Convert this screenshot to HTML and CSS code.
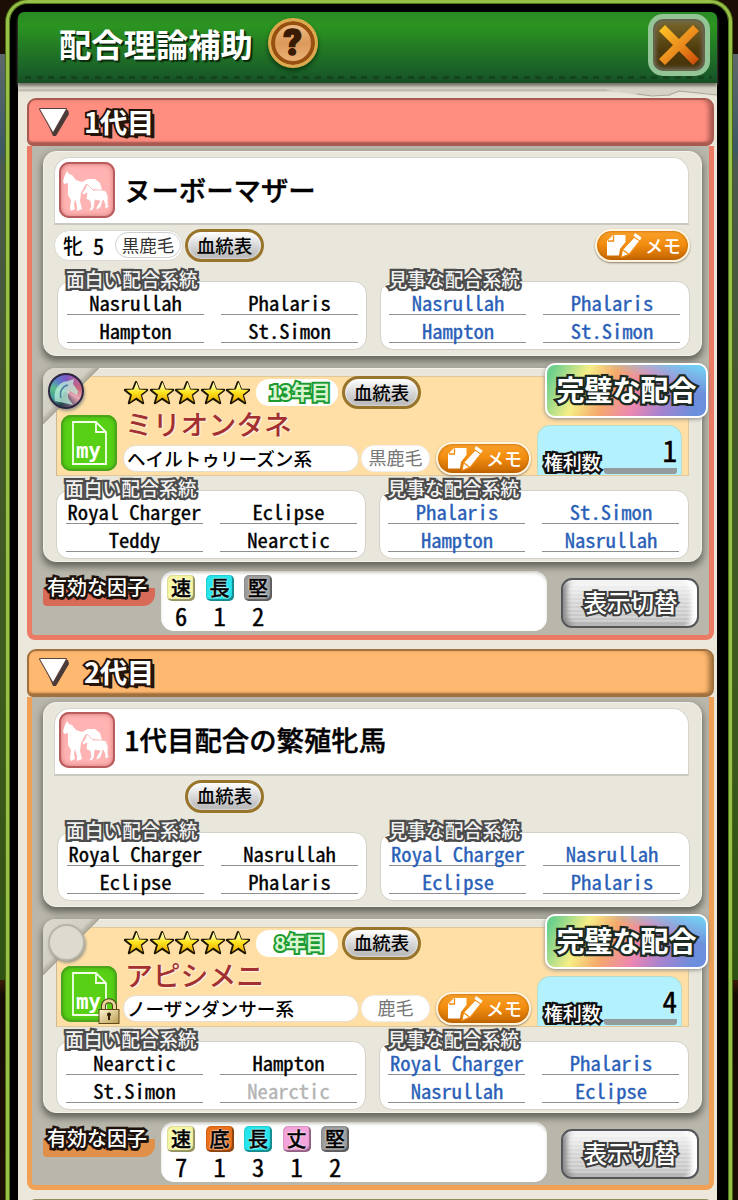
FILE: index.html
```
<!DOCTYPE html>
<html lang="ja">
<head>
    <meta charset="UTF-8">
    <meta name="viewport" content="width=device-width, initial-scale=1.0">
    <title>配合理論補助</title>
    <link rel="stylesheet" href="styles.css">
</head>
<body>
    <!-- shared icons -->
    <svg class="defs" width="0" height="0">
        <defs>
            <linearGradient id="gold" x1="0" y1="0" x2="0" y2="1">
                <stop offset="0.2" stop-color="#fffba0"/>
                <stop offset="0.5" stop-color="#ffe51e"/>
                <stop offset="1" stop-color="#e8a800"/>
            </linearGradient>
            <linearGradient id="cross" x1="0" y1="0" x2="1" y2="1">
                <stop offset="0" stop-color="#ffc928"/>
                <stop offset="0.55" stop-color="#ea8a1c"/>
                <stop offset="1" stop-color="#c94408"/>
            </linearGradient>
            <linearGradient id="brass" x1="0" y1="0" x2="1" y2="1">
                <stop offset="0" stop-color="#fff6cf"/>
                <stop offset="1" stop-color="#b99a52"/>
            </linearGradient>
        </defs>
        <symbol id="star" viewBox="0 0 26 26">
            <path d="M13 2.2 L15.9 9.6 L24 10 L17.7 15 L20 23 L13 18.4 L6 23 L8.3 15 L2 10 L10.1 9.6 Z" fill="#1b1500" stroke="#1b1500" stroke-width="2.4" stroke-linejoin="round"/>
            <path d="M13.6 2.2 L16.2 9.4 L23.6 10 L17.7 14.8 L19.7 22 L13.4 17.6 L7 22 L9 14.8 L3.3 10 L10.7 9.4 Z" fill="url(#gold)"/>
        </symbol>
        <symbol id="mare" viewBox="0 0 56 56">
            <path d="M8 9 L10 12 L13 13 L17 18 L23 20 L29 17 L36 17 L41 21 L43 28 L40 28 L33 27 L29 25 L27 22 L24 27 L22 31 L21 39 L23 47 L18 49 L18 44 L16 37 L15 42 L16 47 L12 49 L11 46 L12 38 L9 33 L9 26 L9 21 L5 22 L4 19 L6 13 Z" fill="#fff"/>
            <path d="M28 22 L31 25 L34 28 L43 28 L47 29 L49 34 L49 43 L50 45 L46 47 L46 42 L44 38 L42 45 L38 48 L37 46 L41 39 L36 38 L35 46 L32 49 L30 48 L32 45 L31 39 L27 37 L28 31 L24 33 L23 31 L26 27 Z" fill="#fff" stroke="#f5b4b4" stroke-width="0.8"/>
        </symbol>
        <symbol id="memo" viewBox="0 0 36 26">
            <path d="M7 3 H19.500 V10 L14 17 L13 23.500 H1 V9 Z" fill="#fff"/>
            <path d="M2 9 H7.500 V3.500" fill="none" stroke="#ef8a10" stroke-width="1.300"/>
            <path d="M28 5 L34 9 L23.500 22 L15 25.500 L16.500 17.500 Z" fill="#fff" stroke="#f08e12" stroke-width="1.200"/>
            <path d="M29 1 L35.500 5.500 L34 8.500 L27.500 4 Z" fill="#fff"/>
            <path d="M17 18 L22.500 22" stroke="#f08e12" stroke-width="1.200"/>
        </symbol>
        <symbol id="page" viewBox="0 0 56 56">
            <path d="M12 7 H35 L45 17 V49 H12 Z M35 7 V17 H45" fill="none" stroke="#f4ffe9" stroke-width="1.8"/>
        </symbol>
        <symbol id="arrow" viewBox="0 0 34 32">
            <path d="M5 4 H31 L32 8 L19 30 H16 Z" fill="#4a3a38"/>
            <path d="M3 3 H29 L16 26 Z" fill="#fff" stroke="#57413e" stroke-width="2" stroke-linejoin="round"/>
        </symbol>
        <symbol id="lock" viewBox="0 0 22 26">
            <path d="M5.5 13 V8 C5.5 1 16.500 1 16.500 8 V13" fill="none" stroke="#4d3c14" stroke-width="5"/>
            <path d="M5.500 13 V8 C5.500 1 16.500 1 16.500 8 V13" fill="none" stroke="#e6d59a" stroke-width="3"/>
            <rect x="1" y="11.500" width="20" height="14" fill="url(#brass)" stroke="#5d4817"/>
            <path d="M11 15 V22" stroke="#2e2105" stroke-width="2"/>
            <circle cx="11" cy="16.500" r="2" fill="#2e2105"/>
        </symbol>
    </svg>

    <div class="window">
        <header class="titlebar">
            <h1>配合理論補助</h1>
            <span class="help">?</span>
            <button class="close"><svg width="46" height="46" viewBox="0 0 46 46"><path d="M3 9 L9 3 L23 17 L37 3 L43 9 L29 23 L43 37 L37 43 L23 29 L9 43 L3 37 L17 23 Z" fill="url(#cross)"/></svg></button>
        </header>
        <main class="paper">
            <svg class="tear" width="110" height="14" viewBox="0 0 110 14"><path d="M0 3 L30 8 L62 9 L72 4 L110 8 V0 H0 Z" fill="#d6d3c5"/><path d="M30 7 L45 9 L62 8 L72 4 L110 8" fill="none" stroke="#aaa79a" stroke-width="1.200"/></svg>

            <section class="generation coral">
                <h2><svg width="34" height="32"><use href="#arrow"/></svg>1代目</h2>
                <div class="panel">
                    <article class="card mare">
                        <div class="name-box">
                            <span class="icon pink"><svg width="56" height="56"><use href="#mare"/></svg></span>
                            <span class="name">ヌーボーマザー</span>
                        </div>
                        <div class="info">
                            <div class="profile">牝<b>5</b><span class="coat">黒鹿毛</span></div>
                            <button class="pedigree">血統表</button>
                            <button class="memo"><svg width="36" height="26"><use href="#memo"/></svg>メモ</button>
                        </div>
                        <div class="groups">
                            <div class="group">
                                <h3>面白い配合系統</h3>
                                <div class="lines"><span>Nasrullah</span><span>Phalaris</span><span>Hampton</span><span>St.Simon</span></div>
                            </div>
                            <div class="group best">
                                <h3>見事な配合系統</h3>
                                <div class="lines"><span>Nasrullah</span><span>Phalaris</span><span>Hampton</span><span>St.Simon</span></div>
                            </div>
                        </div>
                    </article>

                    <article class="card stallion">
                        <span class="corner"></span>
                        <span class="orb rainbow"><svg width="36" height="36" viewBox="0 0 36 36"><path d="M7 28 C5 19 9 9 20 8 L26 6 L25 11 L30 18 L29 22 L22 18 L20 21 C19 26 24 29 25 32" fill="#bff1dc" opacity="0.75"/><path d="M13 25 C11 18 15 13 20 12" fill="none" stroke="#4b7d9c" stroke-width="1.500"/></svg></span>
                        <span class="badge">完璧な配合</span>
                        <div class="peach">
                            <span class="icon green"><svg width="56" height="56"><use href="#page"/></svg><b>my</b></span>
                            <div class="detail">
                                <div class="rank">
                                    <span class="stars"><svg><use href="#star"/></svg><svg><use href="#star"/></svg><svg><use href="#star"/></svg><svg><use href="#star"/></svg><svg><use href="#star"/></svg></span>
                                    <span class="year">13年目</span>
                                    <button class="pedigree">血統表</button>
                                </div>
                                <div class="sire">ミリオンタネ</div>
                                <div class="strain-row">
                                    <span class="strain">ヘイルトゥリーズン系</span>
                                    <span class="coat">黒鹿毛</span>
                                    <button class="memo"><svg width="36" height="26"><use href="#memo"/></svg>メモ</button>
                                </div>
                            </div>
                            <div class="rights"><span>権利数</span><b>1</b></div>
                        </div>
                        <div class="groups">
                            <div class="group">
                                <h3>面白い配合系統</h3>
                                <div class="lines"><span>Royal Charger</span><span>Eclipse</span><span>Teddy</span><span>Nearctic</span></div>
                            </div>
                            <div class="group best">
                                <h3>見事な配合系統</h3>
                                <div class="lines"><span>Phalaris</span><span>St.Simon</span><span>Hampton</span><span>Nasrullah</span></div>
                            </div>
                        </div>
                    </article>

                    <div class="factors">
                        <h4>有効な因子</h4>
                        <ul>
                            <li><i class="speed">速</i>6</li>
                            <li><i class="long">長</i>1</li>
                            <li><i class="solid">堅</i>2</li>
                        </ul>
                        <button class="switch">表示切替</button>
                    </div>
                </div>
            </section>

            <section class="generation orange">
                <h2><svg width="34" height="32"><use href="#arrow"/></svg>2代目</h2>
                <div class="panel">
                    <article class="card mare">
                        <div class="name-box">
                            <span class="icon pink"><svg width="56" height="56"><use href="#mare"/></svg></span>
                            <span class="name">1代目配合の繁殖牝馬</span>
                        </div>
                        <div class="info only-pedigree">
                            <button class="pedigree">血統表</button>
                        </div>
                        <div class="groups">
                            <div class="group">
                                <h3>面白い配合系統</h3>
                                <div class="lines"><span>Royal Charger</span><span>Nasrullah</span><span>Eclipse</span><span>Phalaris</span></div>
                            </div>
                            <div class="group best">
                                <h3>見事な配合系統</h3>
                                <div class="lines"><span>Royal Charger</span><span>Nasrullah</span><span>Eclipse</span><span>Phalaris</span></div>
                            </div>
                        </div>
                    </article>

                    <article class="card stallion">
                        <span class="corner"></span>
                        <span class="orb"></span>
                        <span class="badge">完璧な配合</span>
                        <div class="peach">
                            <span class="icon green"><svg width="56" height="56"><use href="#page"/></svg><b>my</b><svg class="lock" width="22" height="26"><use href="#lock"/></svg></span>
                            <div class="detail">
                                <div class="rank">
                                    <span class="stars"><svg><use href="#star"/></svg><svg><use href="#star"/></svg><svg><use href="#star"/></svg><svg><use href="#star"/></svg><svg><use href="#star"/></svg></span>
                                    <span class="year">8年目</span>
                                    <button class="pedigree">血統表</button>
                                </div>
                                <div class="sire">アピシメニ</div>
                                <div class="strain-row">
                                    <span class="strain">ノーザンダンサー系</span>
                                    <span class="coat">鹿毛</span>
                                    <button class="memo"><svg width="36" height="26"><use href="#memo"/></svg>メモ</button>
                                </div>
                            </div>
                            <div class="rights"><span>権利数</span><b>4</b></div>
                        </div>
                        <div class="groups">
                            <div class="group">
                                <h3>面白い配合系統</h3>
                                <div class="lines"><span>Nearctic</span><span>Hampton</span><span>St.Simon</span><span class="off">Nearctic</span></div>
                            </div>
                            <div class="group best">
                                <h3>見事な配合系統</h3>
                                <div class="lines"><span>Royal Charger</span><span>Phalaris</span><span>Nasrullah</span><span>Eclipse</span></div>
                            </div>
                        </div>
                    </article>

                    <div class="factors">
                        <h4>有効な因子</h4>
                        <ul>
                            <li><i class="speed">速</i>7</li>
                            <li><i class="bottom">底</i>1</li>
                            <li><i class="long">長</i>3</li>
                            <li><i class="stout">丈</i>1</li>
                            <li><i class="solid">堅</i>2</li>
                        </ul>
                        <button class="switch">表示切替</button>
                    </div>
                </div>
            </section>

            <section class="generation next"><h2></h2></section>
        </main>
    </div>
</body>
</html>
```
FILE: styles.css
```
* {
    box-sizing: border-box;
}

body {
    margin: 0;
    height: 1200px;
    overflow: hidden;
    background: linear-gradient(#1c0e04 0, #1c0e04 54px, #5d686a 54px, #4b6068 110px, #3c5862 150px, #4a5a50 165px, #43582c 400px, #3d5a1e 700px, #2f5212 980px, #3a1a04 980px, #150b03 995px, #1c0e04 1200px);
    font-family: "Noto Sans CJK JP", sans-serif;
    color: #000;
}

h1, h2, h3, h4, ul {
    margin: 0;
    padding: 0;
    font-weight: bold;
}

button {
    font-family: inherit;
    padding: 0;
    white-space: nowrap;
}

.defs {
    position: absolute;
}

.window {
    width: 726px;
    height: 1230px;
    margin-left: 6px;
    padding: 9px 12px 0 9px;
    background: #000;
    border: 3px solid #98bf4a;
    border-bottom: none;
    border-radius: 22px 22px 0 0;
    box-shadow: inset 0 0 0 1px #4d7a14, 0 0 0 1px #47680f;
}

.titlebar {
    display: flex;
    align-items: flex-start;
    height: 71px;
    padding-left: 41px;
    position: relative;
    z-index: 1;
    background: linear-gradient(#2a8a24, #2b9421 20%, #237a24 50%, #185a29 90%, #174d22);
    border-radius: 6px 6px 0 0;
    box-shadow: 0 3px 3px #77756c;
}

.titlebar::after {
    content: "";
    position: absolute;
    left: 7px;
    right: 5px;
    top: 64px;
    height: 3px;
    background: repeating-linear-gradient(90deg, #13441b 0, #13441b 6px, transparent 6px, transparent 11.6px);
}

.titlebar h1 {
    margin-top: 7px;
    font-size: 32.3px;
    line-height: 48px;
    color: #fff;
    text-shadow: 2px 2px 1px #0a2a0c, 1px 1px 0 #0a2a0c;
}

.help {
    width: 50px;
    height: 50px;
    margin: 6px 0 0 15px;
    border: 3px solid #dca94c;
    border-radius: 50%;
    background: linear-gradient(#f3c391, #dc9a59 50%, #eeb57c);
    box-shadow: inset 0 0 0 4px #97500f, 0 3px 4px #0c3a12;
    color: #3a1c06;
    font: 900 36px/44px "Roboto", sans-serif;
    -webkit-text-stroke: 1.5px #3a1c06;
    text-align: center;
}

.close {
    width: 62px;
    height: 62px;
    margin: 2px 7px 0 auto;
    position: relative;
    z-index: 2;
    border: 5px solid #93c596;
    border-radius: 15px;
    background: linear-gradient(#7b6a2c, #4f3a0c 60%, #463208);
    box-shadow: inset 0 0 0 2px #66624b, inset 0 0 4px 3px #6d6a57;
    display: flex;
    align-items: center;
    justify-content: center;
}

.paper {
    position: relative;
    height: 1130px;
    padding: 15px 3px 0 9px;
    background: linear-gradient(#d6d3c5 0, #d6d3c5 6px, #aeab9f 7px, #e6e2d5 9px, #ebe8db 14px);
}

.tear {
    position: absolute;
    top: 4px;
    right: 0;
}

/* one generation block */
.generation {
    position: relative;
    margin-bottom: 9px;
    --bar: #ff8e80;
    --edge: #a85950;
    --frame: #ec7b65;
    --brush: #d86a58;
}

.generation.orange,
.generation.next {
    --bar: #ffb870;
    --edge: #a0703e;
    --frame: #f0a155;
    --brush: #e09048;
}

.generation.next {
    --bar: #d8d27a;
    --edge: #8f8a5a;
}

.generation h2 {
    display: flex;
    align-items: center;
    height: 48px;
    padding: 0 0 2px 8px;
    background: var(--bar);
    border: 2px solid var(--edge);
    border-bottom-width: 3px;
    border-radius: 9px 9px 8px 6px;
    box-shadow: inset -5px 0 5px -2px var(--edge), inset 0 -2px 2px -1px var(--edge);
    font-size: 27.5px;
    line-height: 40px;
    letter-spacing: -0.5px;
    color: #fff;
    -webkit-text-stroke: 4px #231309;
    paint-order: stroke fill;
    text-shadow: 2px 2px 0 #231309, 4px 3px 0 #231309;
}

.generation h2 svg {
    margin: 2px 13px 0 0;
}

.panel {
    height: 493.5px;
    padding: 5px 7px 0 11px;
    background: #b9b7ab;
    border: 5px solid var(--frame);
    border-top: none;
    border-radius: 0 0 8px 8px;
}

.card {
    position: relative;
    width: 659px;
    margin-bottom: 12px;
    background: #e9e7db;
    border: 1px solid #f4f2ea;
    border-radius: 13px;
    box-shadow: 0 4px 7px 1px #66655c;
}

.card.mare {
    height: 205px;
    padding: 5px 12px 0 10px;
}

.card.stallion {
    height: 194px;
    padding: 7px 12px 0 13px;
    margin-bottom: 9px;
}

.name-box {
    display: flex;
    align-items: center;
    height: 68px;
    padding: 0 4px;
    background: #fff;
    border: 1px solid #d5d4cd;
    border-bottom: 2px solid #c9c8c1;
    border-radius: 16px 16px 0 0;
}

.icon {
    flex: none;
    position: relative;
    width: 56px;
    height: 56px;
    border-radius: 10px;
}

.name-box .icon {
    margin-bottom: 2px;
}

.icon svg {
    display: block;
}

.icon.pink {
    background: #ffb3b2;
    box-shadow: inset 0 0 0 2px #b85c5d, inset 0 0 5px 2px #d27778;
}

.icon.green {
    background: #57d016;
    box-shadow: inset 0 0 0 2px #4aa51a, inset 0 0 4px 2px #46a916;
}

.icon.green b {
    position: absolute;
    left: 15px;
    top: 24px;
    font: bold 21px/24px "DejaVu Sans Mono", monospace;
    letter-spacing: -0.5px;
    color: #fff;
}

.icon .lock {
    position: absolute;
    left: 37px;
    top: 32px;
}

.name {
    margin: 0 0 4px 9px;
    font-size: 27.4px;
    font-weight: 500;
    line-height: 40px;
    -webkit-text-stroke: 0.4px #000;
}

.info {
    display: flex;
    align-items: center;
    height: 33px;
    margin: 4px -1px 6px 0;
}

.info.only-pedigree {
    padding-left: 131px;
}

.profile {
    display: flex;
    align-items: center;
    width: 129px;
    height: 31px;
    margin-right: 2px;
    padding: 0 0 1px 8px;
    background: #fff;
    border: 1px solid #dad8d0;
    border-radius: 15px;
    font-size: 20px;
    font-weight: 500;
}

.profile b {
    margin: 0 11px 0 10px;
    font: 500 22px/26px "Noto Sans Mono CJK JP", "Noto Sans CJK JP", monospace;
    -webkit-text-stroke: 0.4px #000;
}

.coat {
    width: 66px;
    height: 26px;
    border: 1px solid #cfcfcf;
    border-radius: 13px;
    background: #fff;
    color: #333;
    font-size: 17.5px;
    font-weight: 400;
    line-height: 23px;
    text-align: center;
    white-space: nowrap;
}

.pedigree {
    width: 79px;
    height: 33px;
    border: 3px solid #98752a;
    border-radius: 17px;
    background: linear-gradient(#fff, #d8d8d8 50%, #b4b4b4);
    box-shadow: inset 0 0 3px #fff;
    font-size: 18.5px;
    font-weight: 500;
    line-height: 24px;
    padding-bottom: 2px;
    color: #000;
}

.memo {
    display: flex;
    align-items: center;
    width: 95px;
    height: 33px;
    padding: 0 0 1px 9px;
    border: 2px solid #fff3de;
    border-radius: 17px;
    background: linear-gradient(#f9a12c, #f38e10 45%, #c46500);
    box-shadow: 0 1px 2px #8a7c66, inset 0 0 3px #b05c00;
    color: #fff;
    font-size: 18px;
    font-weight: 500;
    line-height: 28px;
}

.memo svg {
    margin-right: 3px;
}

.info .memo {
    margin-left: auto;
}

.groups {
    display: grid;
    grid-template-columns: 310px 310px;
    gap: 12.5px;
    margin-left: 3px;
}

.group {
    position: relative;
    padding-top: 13px;
}

.group h3 {
    position: absolute;
    left: 9px;
    top: 0;
    font-size: 18.8px;
    line-height: 21px;
    font-weight: 500;
    color: #f2f2f2;
    -webkit-text-stroke: 4.5px #4c4c4c;
    paint-order: stroke fill;
    white-space: nowrap;
}

.lines {
    display: grid;
    grid-template-columns: 137px 137px;
    grid-auto-rows: 28px;
    justify-content: center;
    column-gap: 17px;
    height: 69px;
    padding-top: 5px;
    background: #fff;
    border: 1px solid #d3d1c8;
    border-radius: 13px;
}

.lines span {
    padding-left: 1px;
    border-bottom: 1px solid #909090;
    font: 500 20.6px/30px "Noto Sans Mono CJK JP", monospace;
    -webkit-text-stroke: 0.35px currentColor;
    height: 28px;
    text-align: center;
    white-space: nowrap;
}

.best .lines span {
    color: #2a5fb8;
}

.lines .off {
    color: #b4b4b4;
}

/* stallion card */
.corner {
    position: absolute;
    left: -1px;
    top: -1px;
    width: 56px;
    height: 56px;
    background: linear-gradient(135deg, #dcdacf 0, #d2d0c4 42%, #aaa697 50%, transparent 51%);
    border-radius: 12px 0 0 0;
    z-index: 1;
}

.orb {
    position: absolute;
    left: 4px;
    top: 4px;
    width: 37px;
    height: 37px;
    border: 2px solid #b7b5a7;
    border-radius: 50%;
    background: #dddbd0;
    box-shadow: 1px 2px 3px #9b988b;
    z-index: 2;
}

.orb.rainbow {
    width: 36px;
    height: 36px;
    border: 2px solid #2d2540;
    background: conic-gradient(#7a58c8, #b35fa0, #c86878, #e9a9b5, #735a74, #24434a, #3e9c98, #5dc08a, #5a7fc8, #7a58c8);
}

.orb svg {
    display: block;
    margin: -2px;
}

.badge {
    position: absolute;
    right: -7px;
    top: -6px;
    width: 163px;
    height: 55px;
    z-index: 2;
    border: 2.5px solid #fff;
    border-radius: 10px;
    background: linear-gradient(15deg, transparent 68%, #72cdf2 95%), linear-gradient(115deg, #6cd08c 4%, #f6ee86 24%, #f5a96c 40%, #ec87b2 58%, #a683cf 74%, #6b8fdc 92%);
    box-shadow: 0 1px 4px #888;
    color: #fff;
    font-size: 28px;
    font-weight: bold;
    line-height: 49px;
    text-align: center;
    -webkit-text-stroke: 4.5px #1d2a22;
    paint-order: stroke fill;
    text-shadow: 1px 2px 0 #1d2a22;
}

.peach {
    display: flex;
    align-items: flex-end;
    width: 633px;
    height: 100px;
    margin-left: -1px;
    padding-left: 4px;
    background: #ffdfa5;
    border: 1px solid #e0c898;
    border-left-color: #c9b995;
}

.peach .icon {
    margin-bottom: 4px;
}

.detail {
    width: 413px;
    height: 98px;
    margin-left: 6px;
}

.rank {
    display: flex;
    align-items: center;
    height: 31px;
}

.stars {
    display: flex;
    width: 128px;
    margin-right: 5px;
}

.stars svg {
    flex: none;
    width: 26px;
    height: 26px;
    margin-right: -0.5px;
}

.year {
    width: 82px;
    height: 27px;
    margin-right: 4px;
    padding-left: 5px;
    background: #fff;
    border-radius: 13px;
    font-size: 20px;
    font-weight: bold;
    line-height: 26px;
    letter-spacing: -0.5px;
    text-align: center;
    color: #d9f5cf;
    -webkit-text-stroke: 4px #1d9a32;
    paint-order: stroke fill;
}

.sire {
    height: 35px;
    padding-left: 2px;
    font-size: 27.8px;
    font-weight: 500;
    line-height: 30px;
    color: #a33030;
    text-shadow: 0 0 2px #fff2e0, 1px 1px 1px #fff2e0;
}

.strain-row {
    display: flex;
    align-items: center;
    height: 30px;
}

.strain {
    width: 236px;
    height: 27px;
    margin-right: 2px;
    padding-left: 3px;
    border: 1px solid #e5ddd0;
    border-radius: 13px;
    background: #fff;
    font-size: 18.6px;
    font-weight: 500;
    line-height: 24px;
}

.strain-row .coat {
    width: 69px;
    height: 27px;
    margin-right: 6px;
    border-color: #eee;
    color: #777;
    font-size: 18px;
}

.rights {
    display: flex;
    align-items: flex-end;
    width: 145px;
    height: 50px;
    margin-left: 1px;
    padding: 0 4px 1px 6px;
    background: #b2f1fd;
    border: 1px solid #b9dcc8;
    border-bottom: none;
    border-radius: 13px 13px 0 0;
}

.rights span {
    width: 60px;
    font-size: 19px;
    font-weight: 500;
    line-height: 25px;
    letter-spacing: -0.3px;
    color: #fff;
    -webkit-text-stroke: 4.5px #111;
    paint-order: stroke fill;
}

.rights b {
    width: 74px;
    height: 42px;
    border-bottom: 6px solid #939b9c;
    border-radius: 3px;
    font: 500 29px/34px "Noto Sans Mono CJK JP", "Noto Sans CJK JP", monospace;
    -webkit-text-stroke: 0.5px #000;
    text-align: right;
    text-shadow: 0 0 3px #fff;
}

.stallion .groups {
    margin: 1px 0 0 -1px;
}

/* factor row */
.factors {
    display: flex;
    align-items: flex-start;
}

.factors h4 {
    width: 112px;
    height: 30px;
    margin: 5px 6px 0 0;
    padding-left: 4px;
    background: linear-gradient(var(--brush), var(--brush)) no-repeat 0 12px / 112px 18px;
    border-radius: 0 14px 12px 4px;
    font-size: 20px;
    font-weight: 500;
    line-height: 21px;
    color: #fff;
    -webkit-text-stroke: 5px #1d120b;
    paint-order: stroke fill;
    text-shadow: 1px 3px 0 #1d120b;
}

.factors ul {
    display: flex;
    gap: 10.5px;
    width: 386px;
    height: 60px;
    padding: 4px 6px;
    background: #fff;
    border-radius: 13px;
    box-shadow: inset 0 2px 3px #d9d9d5;
    list-style: none;
}

.factors li {
    display: flex;
    flex-direction: column;
    align-items: center;
    width: 28px;
    font: 500 24.5px/29px "Noto Sans Mono CJK JP", "Noto Sans CJK JP", monospace;
    -webkit-text-stroke: 0.4px #000;
}

.factors i {
    width: 28px;
    height: 28px;
    border-radius: 5px;
    box-shadow: inset -2px -2px 1px rgba(0, 0, 0, 0.4), inset 1px 1px 1px rgba(0, 0, 0, 0.1);
    font: 500 20px/26px "Noto Sans CJK JP", sans-serif;
    text-align: center;
    text-shadow: 0 0 2px #fff, 0 0 2px #fff;
}

.speed { background: #f7f6a4; }
.long { background: #25e6ec; }
.solid { background: #9c9c9c; }
.bottom { background: #ea701a; }
.stout { background: #f3a4da; }

.switch {
    width: 138px;
    height: 50px;
    margin: 7px 0 0 14px;
    border: 2px solid #55565a;
    border-radius: 11px;
    background: repeating-linear-gradient(rgba(255, 255, 255, 0.25) 0 2px, transparent 2px 4px), linear-gradient(#f8f8f8, #d4d4d4 50%, #c0c0c0);
    box-shadow: inset -6px 2px 5px #fff, inset 4px -1px 5px #8b8b8b;
    padding: 0 0 2px 1px;
    font-size: 23.5px;
    font-weight: 500;
    line-height: 42px;
    color: #fff;
    -webkit-text-stroke: 4px #3b3b3b;
    paint-order: stroke fill;
}
```
